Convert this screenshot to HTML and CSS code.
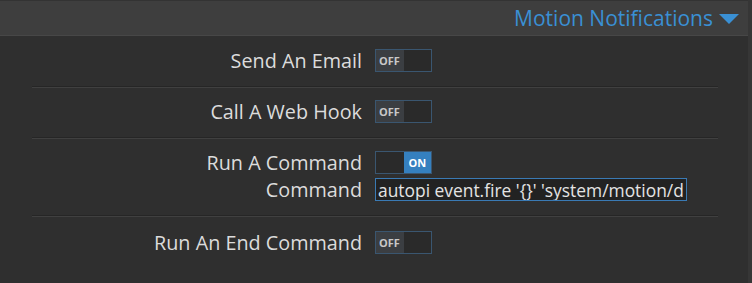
FILE: index.html
```html
<html><head>
<meta charset="UTF-8">
<title>Motion Notifications</title>
<link rel="stylesheet" href="styles.css">
</head>
<body>
  <div class="panel-header">
    <span class="panel-title">Motion Notifications</span>
    <span class="caret"></span>
  </div>

  <div class="panel-body">
    <div class="form-group">
      <label class="field-label">Send An Email</label>
      <div class="toggle off"><span class="toggle-left">OFF</span><span class="toggle-right"></span></div>
    </div>

    <div class="form-group">
      <label class="field-label">Call A Web Hook</label>
      <div class="toggle off"><span class="toggle-left">OFF</span><span class="toggle-right"></span></div>
    </div>

    <div class="form-group">
      <label class="field-label">Run A Command</label>
      <div class="toggle on"><span class="toggle-left"></span><span class="toggle-right">ON</span></div>
      <label class="field-label" for="command">Command</label>
      <input type="text" id="command" class="text-input" value="autopi event.fire '{}' 'system/motion/detected'">
    </div>

    <div class="form-group last">
      <label class="field-label">Run An End Command</label>
      <div class="toggle off"><span class="toggle-left">OFF</span><span class="toggle-right"></span></div>
    </div>
  </div>
</body></html>
```

FILE: styles.css
```css
body {
  margin: 0;
  background-color: #2f2f2f;
  font-family: "Open Sans", "DejaVu Sans", sans-serif;
  color: #dcdcdc;
  height: 283px;
  overflow: hidden;
  border-right: 4px solid #363636;
  box-sizing: border-box;
}
.panel-header {
  height: 34px;
  background-color: #3e3e3e;
  border-top: 1px solid #333;
  border-bottom: 1px solid #474747;
  display: flex;
  align-items: center;
  justify-content: flex-end;
  padding-right: 9px;
}
.panel-title {
  color: #3a90d4;
  font-size: 21px;
}
.caret {
  width: 0;
  height: 0;
  border-left: 10px solid transparent;
  border-right: 10px solid transparent;
  border-top: 10px solid #3a90d4;
  margin-left: 6px;
  margin-top: 2px;
}
.panel-body {
  padding: 0 30px 0 32px;
}
.form-group {
  display: grid;
  grid-template-columns: 330px 1fr;
  column-gap: 13px;
  row-gap: 4px;
  align-items: center;
  padding: 13px 0 14px;
  border-bottom: 1px solid #262626;
  box-shadow: 0 1px 0 #404040;
}
.form-group.last {
  border-bottom: none;
  box-shadow: none;
  padding-top: 15px;
}
.field-label {
  text-align: right;
  font-size: 19.8px;
  line-height: 23px;
}
.toggle {
  width: 55px;
  height: 21px;
  border: 1px solid #3a5670;
  display: flex;
  font-size: 11px;
  font-weight: bold;
  line-height: 21px;
}
.toggle-left, .toggle-right {
  width: 28px;
}
.toggle.off .toggle-left {
  background-color: #3b3e42;
  color: #c8c8c8;
  padding-left: 3px;
  box-sizing: border-box;
}
.toggle.off .toggle-right {
  background-color: #2a2a2a;
}
.toggle.on .toggle-left {
  background-color: #2a2a2a;
}
.toggle.on .toggle-right {
  background-color: #3580bf;
  color: #fff;
  text-align: center;
}
.text-input {
  width: 312px;
  height: 23px;
  box-sizing: border-box;
  background-color: #222;
  border: 1px solid #3a7ab4;
  color: #e4e4e4;
  font-family: "Open Sans", "DejaVu Sans", sans-serif;
  font-size: 17.4px;
  padding: 0 2px;
  outline: none;
}
```
